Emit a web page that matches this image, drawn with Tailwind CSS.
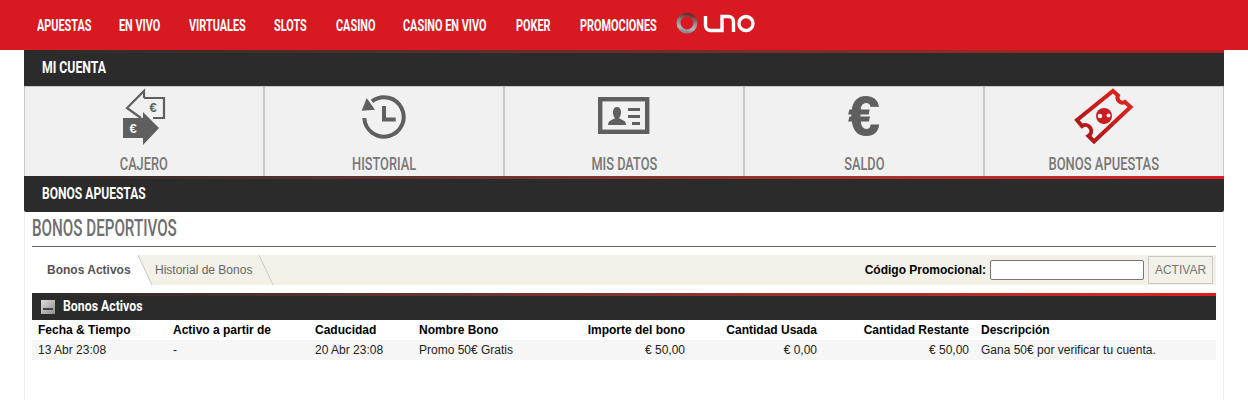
<!DOCTYPE html>
<html lang="es">
<head>
<meta charset="utf-8">
<script src="https://cdn.jsdelivr.net/npm/@tailwindcss/browser@4"></script>
<title>Bonos</title>
</head>
<body class="bg-white font-['Liberation_Sans',Arial,sans-serif] overflow-hidden h-[400px]">
<header class="relative z-10 h-[50px] bg-[#d81921] flex items-start pl-[37px]">
  <nav class="flex gap-7 text-white font-bold text-[16px] font-['Roboto',sans-serif] h-[50px] pt-[1px] items-center">
    <a class="block w-[54px] whitespace-nowrap origin-left scale-x-[.68]">APUESTAS</a>
    <a class="block w-[42px] whitespace-nowrap origin-left scale-x-[.68]">EN VIVO</a>
    <a class="block w-[57px] whitespace-nowrap origin-left scale-x-[.68]">VIRTUALES</a>
    <a class="block w-[34px] whitespace-nowrap origin-left scale-x-[.68]">SLOTS</a>
    <a class="block w-[39px] whitespace-nowrap origin-left scale-x-[.68]">CASINO</a>
    <a class="block w-[85px] whitespace-nowrap origin-left scale-x-[.68]">CASINO EN VIVO</a>
    <a class="block w-[36px] whitespace-nowrap origin-left scale-x-[.68]">POKER</a>
    <a class="block w-[78px] whitespace-nowrap origin-left scale-x-[.68]">PROMOCIONES</a>
  </nav>
  <svg class="ml-[18px] mt-[12px]" width="82" height="24" viewBox="0 0 82 24" fill="none" aria-label="uno">
    <defs><linearGradient id="r" x1="0.6" y1="0" x2="0.4" y2="1"><stop offset="0" stop-color="#6f2a2c"/><stop offset="0.45" stop-color="#8f8a8a"/><stop offset="0.8" stop-color="#b5b5b5"/><stop offset="1" stop-color="#8a8c8f"/></linearGradient></defs>
    <circle cx="11" cy="11" r="8.500" stroke="url(#r)" stroke-width="4"/>
    <path d="M29.500 4V13.500a5 5 0 0 0 5 5H46V4.500H52.500a5 5 0 0 1 5 5V20" stroke="#fff" stroke-width="3.400"/>
    <circle cx="70" cy="11.500" r="7" stroke="#fff" stroke-width="3.400"/>
  </svg>
</header>

<main class="mx-6 w-[1200px] h-[350px] border-x border-[#eeeeee] relative">
  <div class="-mx-px h-[36px] bg-[#2b2b2b] relative flex items-center pl-[18px] text-white font-bold text-[17px] font-['Roboto',sans-serif]">
    <div class="absolute left-0 right-0 top-0 h-[3px] bg-gradient-to-r from-[#2b2b2b] to-[#ae1c22]"></div>
    <span class="block origin-left scale-x-[.72] whitespace-nowrap">MI CUENTA</span>
  </div>

  <div class="-mx-px grid grid-cols-[241px_240px_240px_240px_239px] h-[90px] bg-[#f1f1f1] border-t border-[#c8c8c8] text-[#777777] text-[18px] leading-[20px] font-medium font-['Roboto',sans-serif]">
    <div class="flex flex-col items-center border-l border-r-2 border-[#c8c8c8]">
      <svg class="mt-[1px]" width="48" height="60" viewBox="0 0 48 60">
        <path d="M24 10 H44 V30 H33 M24 10 V3 L7 20 L21 30" fill="none" stroke="#5f5f5f" stroke-width="2.200"/>
        <text x="33" y="24" font-size="13" font-weight="700" text-anchor="middle" fill="#5f5f5f" font-family="Liberation Sans">€</text>
        <path d="M3 30 H23 V24 L39 40 L23 57 V50 H3 Z" fill="#5f5f5f"/>
        <text x="13" y="45" font-size="13" font-weight="700" text-anchor="middle" fill="#f1f1f1" font-family="Liberation Sans">€</text>
      </svg>
      <span class="mt-auto mb-[2px] block scale-x-[.71] whitespace-nowrap">CAJERO</span>
    </div>
    <div class="flex flex-col items-center border-r-2 border-[#c8c8c8]">
      <svg class="mt-[7px]" width="46" height="46" viewBox="0 0 46 46" fill="none">
        <path d="M11 7.300A19.700 19.700 0 1 1 3.300 24" stroke="#5f5f5f" stroke-width="4"/>
        <path d="M0.700 16.700 L5.700 4 L14 15.700 Z" fill="#5f5f5f"/>
        <path d="M23 12 V25.500 H34.700" stroke="#5f5f5f" stroke-width="4"/>
      </svg>
      <span class="mt-auto mb-[2px] block scale-x-[.71] whitespace-nowrap">HISTORIAL</span>
    </div>
    <div class="flex flex-col items-center border-r-2 border-[#c8c8c8]">
      <svg class="mt-[10px]" width="52" height="38" viewBox="0 0 52 38">
        <rect x="2.200" y="2.200" width="47" height="32.600" fill="none" stroke="#5f5f5f" stroke-width="4.400"/>
        <path d="M10 28 C10 23 15 23 17 21 C14 18 14 10 19 10 C24 10 24 18 21 21 C23 23 28 23 28 28 Z" fill="#5f5f5f"/>
        <path d="M30 11 H42 V14 H30 Z M30 18 H42 V21 H30 Z M34 25 H42 V28 H34 Z" fill="#5f5f5f"/>
      </svg>
      <span class="mt-auto mb-[2px] block scale-x-[.71] whitespace-nowrap">MIS DATOS</span>
    </div>
    <div class="flex flex-col items-center border-r-2 border-[#c8c8c8]">
      <span class="mt-[1px] block text-[56px] leading-[56px] font-bold text-[#5f5f5f] font-['Liberation_Sans',sans-serif] [-webkit-text-stroke:1px_#5f5f5f]">€</span>
      <span class="mt-auto mb-[2px] block scale-x-[.71] whitespace-nowrap">SALDO</span>
    </div>
    <div class="flex flex-col items-center border-r border-[#c8c8c8]">
      <svg class="mt-[0px]" width="60" height="59" viewBox="0 0 60 59" fill="none">
        <defs><linearGradient id="t" x1="0" y1="1" x2="1" y2="0"><stop offset="0" stop-color="#a81418"/><stop offset="1" stop-color="#e0281f"/></linearGradient></defs>
        <path d="M39 4 L44 8.500 A5 5 0 0 0 51 15 L56.500 20 L20 54.500 L14.500 49 A5 5 0 0 0 8 39 L3 33 Z" stroke="url(#t)" stroke-width="4"/>
        <circle cx="30" cy="29" r="8" fill="#c41e20"/>
        <circle cx="26" cy="29" r="2.300" fill="#f1f1f1"/>
        <circle cx="34.500" cy="28.500" r="2" fill="#f1f1f1"/>
      </svg>
      <span class="mt-auto mb-[2px] block scale-x-[.72] whitespace-nowrap">BONOS APUESTAS</span>
    </div>
  </div>

  <div class="-mx-px h-[36px] bg-[#2b2b2b] rounded-b-[2px] relative flex items-center pl-[18px] text-white font-bold text-[17px] font-['Roboto',sans-serif]">
    <div class="absolute left-0 right-0 top-0 h-[3px] bg-gradient-to-r from-[#2b2b2b] to-[#e21b23]"></div>
    <span class="block origin-left scale-x-[.71] whitespace-nowrap">BONOS APUESTAS</span>
  </div>

  <div class="px-[7px]">
    <h2 class="h-[35px] pt-[4px] border-b border-[#666666] text-[#6e6e6e] text-[23px] leading-[26px] font-medium font-['Roboto',sans-serif]"><span class="block origin-left scale-x-[.66] whitespace-nowrap">BONOS DEPORTIVOS</span></h2>

    <div class="mt-2 h-[30px] bg-[#f3f0e8] relative flex items-center text-xs">
      <div class="absolute left-0 top-0 w-[246px] h-[30px]">
        <svg width="246" height="30" viewBox="0 0 246 30" fill="none">
          <path d="M0 0 H106 L120 30 H0 Z" fill="#fff"/>
          <path d="M106 0 L120 30 M227 0 L241 30" stroke="#c9c9c4"/>
        </svg>
      </div>
      <span class="relative pl-[15px] font-bold text-[#555555] w-[123px]">Bonos Activos</span>
      <span class="relative text-[#666666]">Historial de Bonos</span>
      <div class="ml-auto relative flex items-center mr-[3px]">
        <label class="font-bold text-black mr-1">Código Promocional:</label>
        <input class="w-[154px] h-[20px] bg-white border border-[#767676] rounded-[2px]" type="text">
        <span class="ml-1 h-[28px] w-[65px] flex items-center justify-center border border-[#c9c7bf] text-[#777777]">ACTIVAR</span>
      </div>
    </div>

    <div class="mt-2 h-[27px] bg-[#2b2b2b] relative flex items-center pl-[9px] text-white font-bold text-[15px] font-['Roboto',sans-serif]">
      <div class="absolute left-0 right-0 top-0 h-[3px] bg-gradient-to-r from-[#2b2b2b] to-[#e21b23]"></div>
      <svg class="mr-2 mt-[1px]" width="14" height="14" viewBox="0 0 14 14">
        <defs><linearGradient id="m" x1="0" y1="0" x2="1" y2="1"><stop offset="0" stop-color="#dddddd"/><stop offset="1" stop-color="#8f8f8f"/></linearGradient></defs>
        <rect width="14" height="14" fill="url(#m)"/><rect x="2" y="8" width="10" height="2" fill="#444"/>
      </svg>
      <span class="block origin-left scale-x-[.82] whitespace-nowrap">Bonos Activos</span>
    </div>

    <table class="w-full table-fixed text-xs text-[#222222] border-collapse">
      <colgroup><col class="w-[135px]"><col class="w-[142px]"><col class="w-[104px]"><col class="w-[147px]"><col class="w-[131px]"><col class="w-[132px]"><col class="w-[152px]"><col></colgroup>
      <thead>
        <tr class="h-[20px] text-black font-bold">
          <th class="text-left font-bold px-[6px]">Fecha &amp; Tiempo</th>
          <th class="text-left font-bold px-[6px]">Activo a partir de</th>
          <th class="text-left font-bold px-[6px]">Caducidad</th>
          <th class="text-left font-bold px-[6px]">Nombre Bono</th>
          <th class="text-right font-bold px-[6px] whitespace-nowrap">Importe del bono</th>
          <th class="text-right font-bold px-[6px] whitespace-nowrap">Cantidad Usada</th>
          <th class="text-right font-bold px-[6px] whitespace-nowrap">Cantidad Restante</th>
          <th class="text-left font-bold px-[6px]">Descripción</th>
        </tr>
      </thead>
      <tbody>
        <tr class="h-[20px] bg-[#f6f6f6]">
          <td class="px-[6px]">13 Abr 23:08</td>
          <td class="px-[6px]">-</td>
          <td class="px-[6px]">20 Abr 23:08</td>
          <td class="px-[6px] whitespace-nowrap">Promo 50€ Gratis</td>
          <td class="px-[6px] text-right">€ 50,00</td>
          <td class="px-[6px] text-right">€ 0,00</td>
          <td class="px-[6px] text-right">€ 50,00</td>
          <td class="px-[6px] whitespace-nowrap">Gana 50€ por verificar tu cuenta.</td>
        </tr>
      </tbody>
    </table>
  </div>
</main>
</body>
</html>
